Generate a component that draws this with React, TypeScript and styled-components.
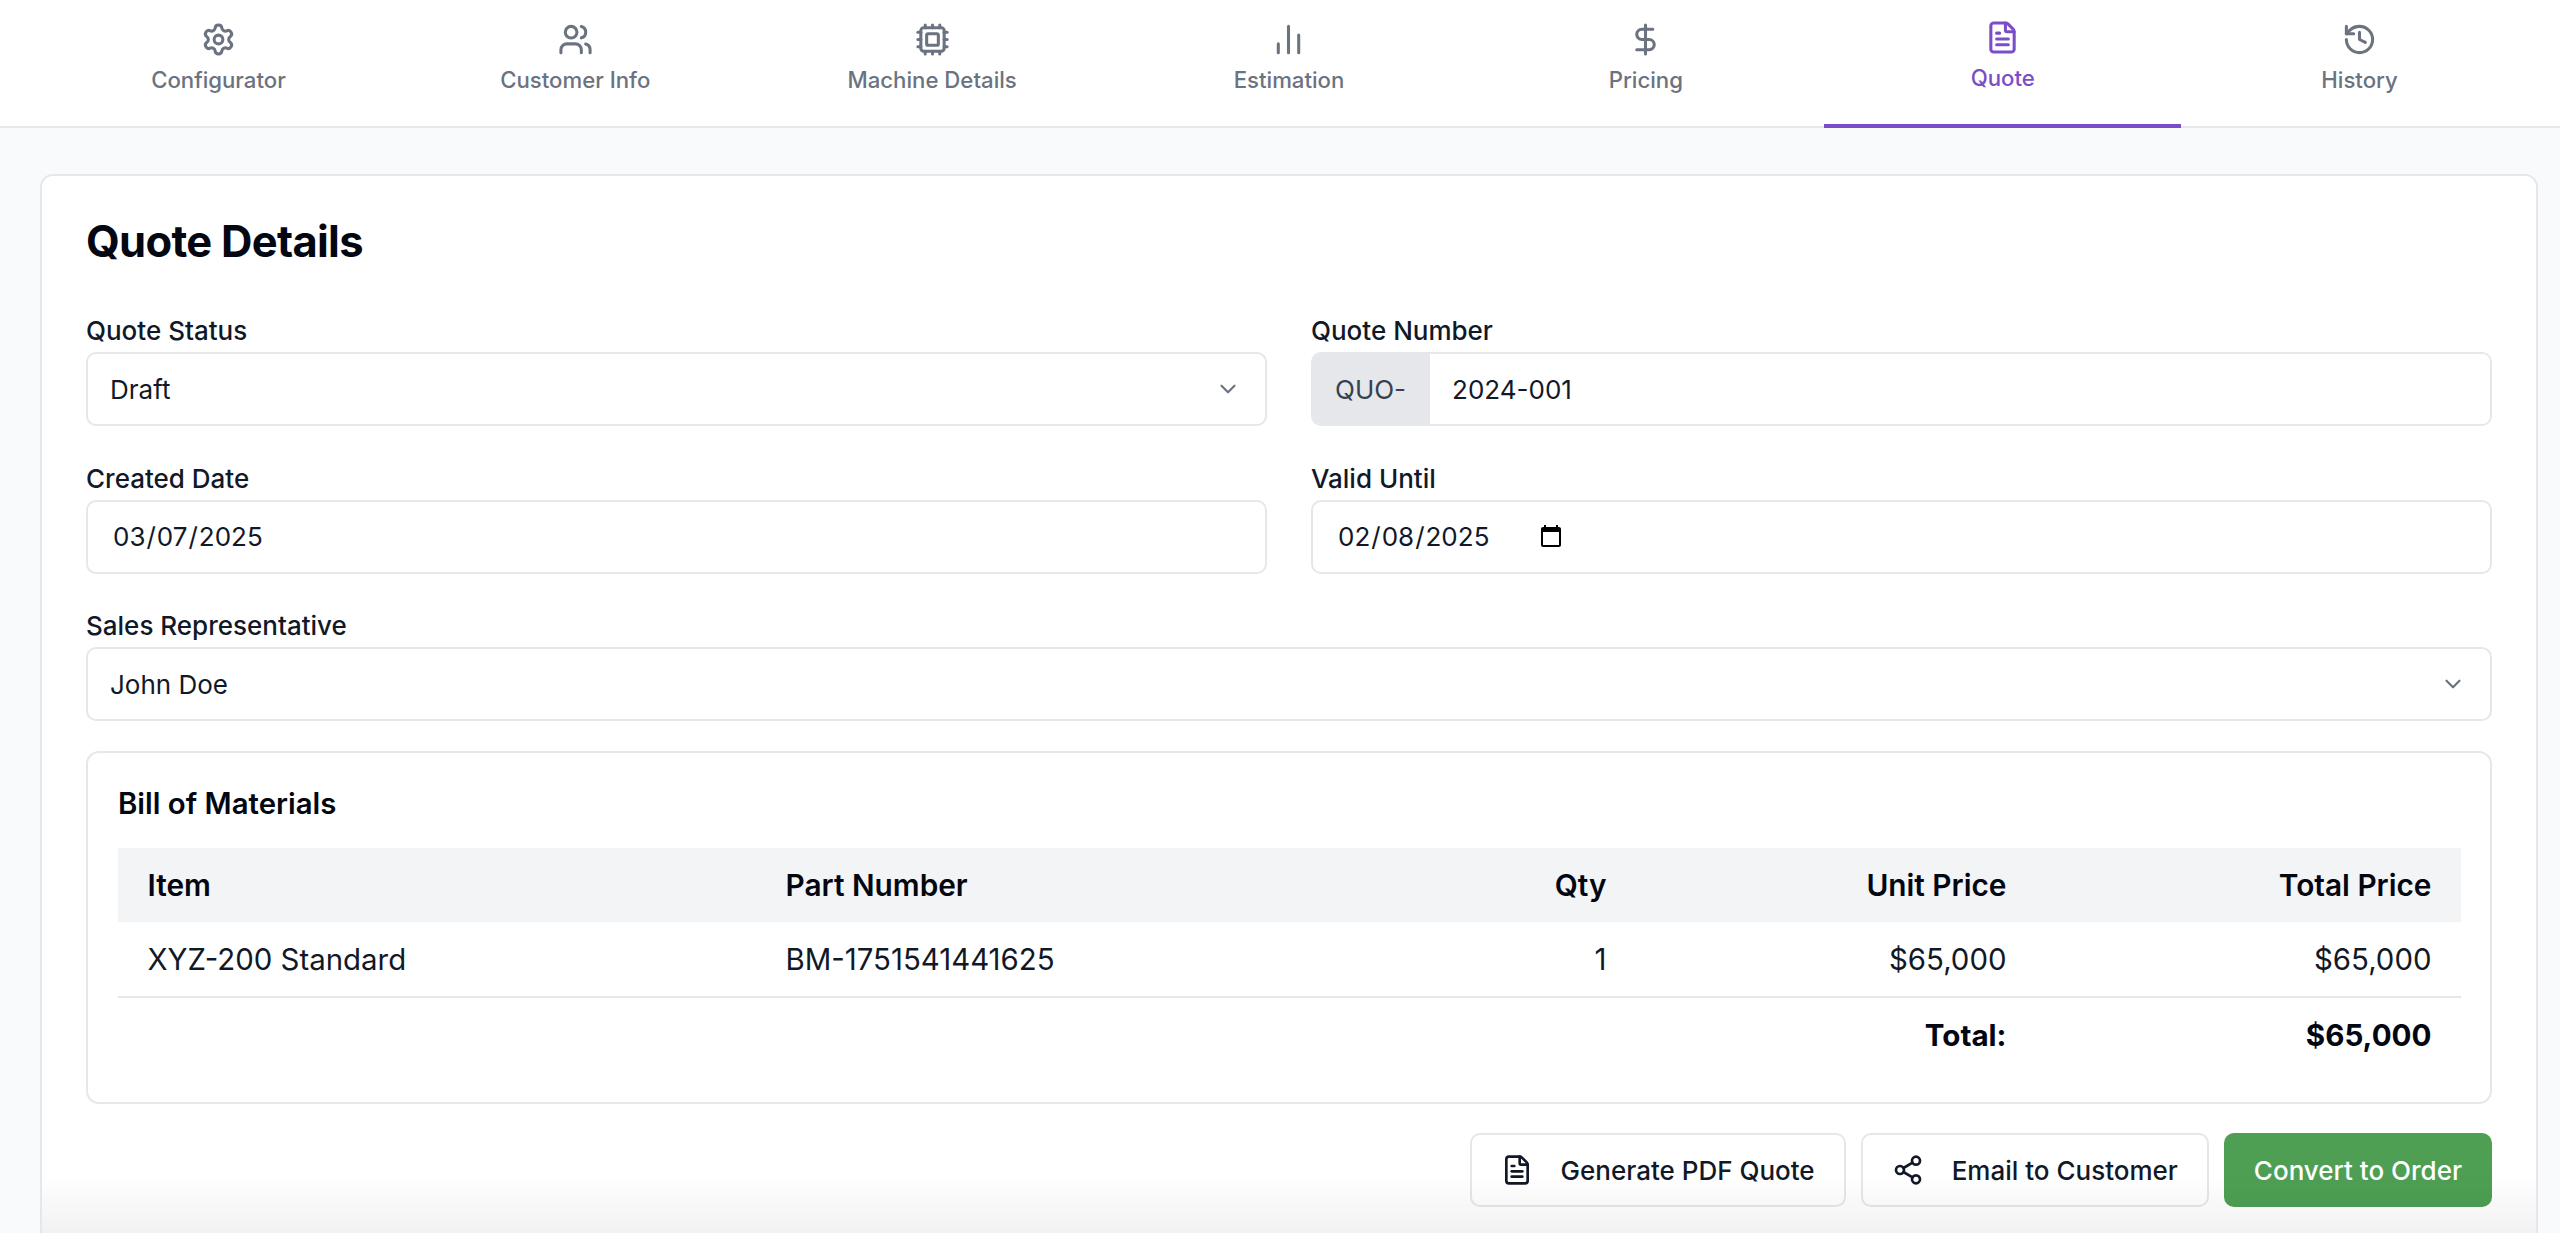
import React from 'react';
import styled, { createGlobalStyle } from 'styled-components';
import {
  Settings,
  Users,
  Cpu,
  ChartNoAxesColumn,
  DollarSign,
  FileText,
  History,
  ChevronDown,
  Share2,
} from 'lucide-react';

const GlobalStyle = createGlobalStyle`
  html, body {
    margin: 0;
    height: 100%;
    overflow: hidden;
    background: #f9fafb;
    font-family: Inter, "Liberation Sans", sans-serif;
    color: #111827;
  }
  * { box-sizing: border-box; }
`;

const TabBar = styled.nav`
  display: grid;
  grid-template-columns: repeat(7, 1fr);
  height: 128px;
  padding: 0 22px 0 40px;
  background: #fff;
  border-bottom: 2px solid #e5e7eb;
`;

const Tab = styled.button<{ $active?: boolean }>`
  display: flex;
  flex-direction: column;
  align-items: center;
  justify-content: flex-start;
  gap: 7px;
  padding: ${({ $active }) => ($active ? '20px' : '22px')} 0 0;
  margin-bottom: -2px;
  background: none;
  border: 0;
  border-bottom: 4px solid ${({ $active }) => ($active ? '#7c4dc9' : 'transparent')};
  color: ${({ $active }) => ($active ? '#7c4dc9' : '#6b7280')};
  font: 500 22.2px/32px Inter, sans-serif;
`;

const Main = styled.main`
  padding: 46px 22px 0 40px;
`;

const Card = styled.section`
  padding: 36px 44px 45px;
  background: #fff;
  border: 2px solid #e5e7eb;
  border-radius: 13px;
`;

const Title = styled.h2`
  margin: 0 0 42px;
  font-size: 43.5px;
  line-height: 58px;
  font-weight: 700;
  letter-spacing: -0.7px;
  color: #030712;
`;

const FormGrid = styled.div`
  display: grid;
  grid-template-columns: 1fr 1fr;
  column-gap: 44px;
  row-gap: 33.5px;
`;

const Field = styled.div<{ $wide?: boolean }>`
  display: flex;
  flex-direction: column;
  gap: 3px;
  grid-column: ${({ $wide }) => ($wide ? '1 / -1' : 'auto')};
`;

const Label = styled.label`
  font-size: 26px;
  line-height: 37px;
  font-weight: 500;
  color: #111827;
`;

const SelectBox = styled.div`
  position: relative;
  display: flex;
`;

const Select = styled.select`
  width: 100%;
  height: 74px;
  padding: 0 22px;
  appearance: none;
  background: #fff;
  border: 2px solid #e5e7eb;
  border-radius: 10px;
  color: #111827;
  font: 400 26px Inter, sans-serif;
`;

const Chevron = styled(ChevronDown)`
  position: absolute;
  top: 24px;
  right: 26px;
  color: #6b7280;
  pointer-events: none;
`;

const InputGroup = styled.div`
  display: flex;
  height: 74px;
  border: 2px solid #e5e7eb;
  border-radius: 10px;
  overflow: hidden;
`;

const Prefix = styled.span`
  display: flex;
  align-items: center;
  padding: 0 24px 0 22px;
  background: #e5e7eb;
  color: #374151;
  font-size: 26px;
`;

const GroupInput = styled.input`
  flex: 1;
  min-width: 0;
  padding: 0 22px;
  border: 0;
  color: #111827;
  font: 400 26px Inter, sans-serif;
`;

const DateBox = styled.div`
  display: flex;
  align-items: center;
  height: 74px;
  padding: 0 24px;
  border: 2px solid #e5e7eb;
  border-radius: 10px;
  font-size: 26px;
`;

const DateInput = styled.input<{ $noPicker?: boolean }>`
  width: 229px;
  height: 40px;
  padding: 0;
  border: 0;
  background: none;
  color: #111827;
  font: 400 26px Inter, sans-serif;

  &::-webkit-calendar-picker-indicator {
    display: ${({ $noPicker }) => ($noPicker ? 'none' : 'block')};
  }
`;

const BomPanel = styled.div`
  margin-top: 30px;
  padding: 31px 30px 31px;
  border: 2px solid #e5e7eb;
  border-radius: 13px;
`;

const BomTitle = styled.h3`
  margin: 0 0 24px;
  font-size: 29.4px;
  line-height: 40px;
  font-weight: 600;
  color: #030712;
`;

const Table = styled.table`
  width: 100%;
  table-layout: fixed;
  border-collapse: collapse;
`;

const Th = styled.th<{ $right?: boolean }>`
  height: 74px;
  padding: 0 29.5px;
  background: #f3f4f6;
  text-align: ${({ $right }) => ($right ? 'right' : 'left')};
  font-size: 29.8px;
  font-weight: 600;
  color: #030712;
`;

const Td = styled.td<{ $right?: boolean }>`
  height: 75px;
  padding: 0 29.5px;
  border-bottom: 2px solid #e5e7eb;
  text-align: ${({ $right }) => ($right ? 'right' : 'left')};
  font-size: 29.4px;
  color: #111827;
`;

const TotalCell = styled.td`
  height: 74px;
  padding: 0 29.5px;
  text-align: right;
  font-size: 29.6px;
  font-weight: 700;
  color: #030712;
`;

const Actions = styled.div`
  display: flex;
  justify-content: flex-end;
  gap: 15px;
  margin-top: 29px;
`;

const Button = styled.button`
  display: flex;
  align-items: center;
  gap: 28px;
  height: 74px;
  padding: 0 29px;
  background: #fff;
  border: 2px solid #e5e7eb;
  border-radius: 10px;
  color: #111827;
  font: 500 26px Inter, sans-serif;
`;

const GreenButton = styled(Button)`
  padding: 0 28px;
  background: #4e9f54;
  border-color: #4e9f54;
  color: #fff;
`;

const BottomShade = styled.div`
  position: fixed;
  left: 42px;
  right: 24px;
  bottom: 0;
  height: 60px;
  background: linear-gradient(to bottom, rgba(0, 0, 0, 0), rgba(0, 0, 0, 0.05));
  pointer-events: none;
`;

const tabs = [
  { label: 'Configurator', icon: Settings },
  { label: 'Customer Info', icon: Users },
  { label: 'Machine Details', icon: Cpu },
  { label: 'Estimation', icon: ChartNoAxesColumn },
  { label: 'Pricing', icon: DollarSign },
  { label: 'Quote', icon: FileText, active: true },
  { label: 'History', icon: History },
];

export default function App() {
  return (
    <>
      <GlobalStyle />
      <TabBar>
        {tabs.map(({ label, icon: Icon, active }) => (
          <Tab key={label} $active={active}>
            <Icon size={35} strokeWidth={2.1} />
            {label}
          </Tab>
        ))}
      </TabBar>
      <Main>
        <Card>
          <Title>Quote Details</Title>
          <FormGrid>
            <Field>
              <Label>Quote Status</Label>
              <SelectBox>
                <Select defaultValue="Draft">
                  <option>Draft</option>
                  <option>Sent</option>
                </Select>
                <Chevron size={26} />
              </SelectBox>
            </Field>
            <Field>
              <Label>Quote Number</Label>
              <InputGroup>
                <Prefix>QUO-</Prefix>
                <GroupInput defaultValue="2024-001" />
              </InputGroup>
            </Field>
            <Field>
              <Label>Created Date</Label>
              <DateBox>
                <DateInput type="date" defaultValue="2025-03-07" $noPicker readOnly />
              </DateBox>
            </Field>
            <Field>
              <Label>Valid Until</Label>
              <DateBox>
                <DateInput type="date" defaultValue="2025-02-08" />
              </DateBox>
            </Field>
            <Field $wide>
              <Label>Sales Representative</Label>
              <SelectBox>
                <Select defaultValue="John Doe">
                  <option>John Doe</option>
                </Select>
                <Chevron size={26} />
              </SelectBox>
            </Field>
          </FormGrid>
          <BomPanel>
            <BomTitle>Bill of Materials</BomTitle>
            <Table>
              <colgroup>
                <col style={{ width: 638 }} />
                <col style={{ width: 650 }} />
                <col style={{ width: 230 }} />
                <col style={{ width: 400 }} />
                <col style={{ width: 425 }} />
              </colgroup>
              <thead>
                <tr>
                  <Th>Item</Th>
                  <Th>Part Number</Th>
                  <Th $right>Qty</Th>
                  <Th $right>Unit Price</Th>
                  <Th $right>Total Price</Th>
                </tr>
              </thead>
              <tbody>
                <tr>
                  <Td>XYZ-200 Standard</Td>
                  <Td>BM-1751541441625</Td>
                  <Td $right>1</Td>
                  <Td $right>$65,000</Td>
                  <Td $right>$65,000</Td>
                </tr>
                <tr>
                  <TotalCell colSpan={4}>Total:</TotalCell>
                  <TotalCell>$65,000</TotalCell>
                </tr>
              </tbody>
            </Table>
          </BomPanel>
          <Actions>
            <Button>
              <FileText size={32} strokeWidth={2} />
              Generate PDF Quote
            </Button>
            <Button>
              <Share2 size={32} strokeWidth={2} />
              Email to Customer
            </Button>
            <GreenButton>Convert to Order</GreenButton>
          </Actions>
        </Card>
      </Main>
      <BottomShade />
    </>
  );
}
